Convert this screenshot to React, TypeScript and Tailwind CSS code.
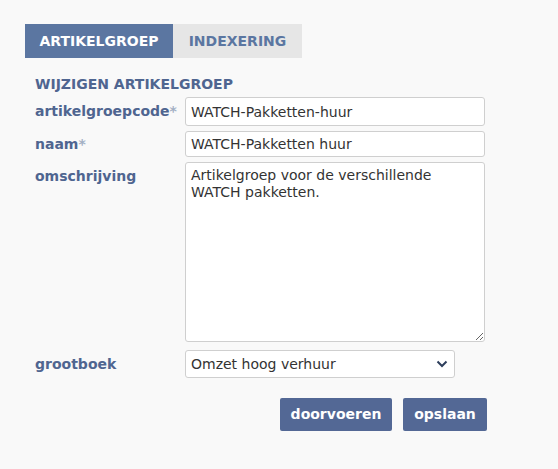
import React from "react";

export default function App() {
  const font = { fontFamily: '"DejaVu Sans", Verdana, sans-serif' };
  return (
    <div className="w-[558px] h-[469px] bg-[#f9f9f9] text-[#4f6590]" style={font}>
      <div className="pt-[24px] pl-[25px]">
        <div className="flex">
          <div className="h-[34px] w-[148px] bg-[#5b76a1] text-white font-bold text-[14px] flex items-center justify-center">ARTIKELGROEP</div>
          <div className="h-[34px] w-[129px] bg-[#e6e6e6] text-[#5b76a1] font-bold text-[14px] flex items-center justify-center">INDEXERING</div>
        </div>
        <div className="pl-[10px] pt-[18px]">
          <div className="font-bold text-[14px] leading-[17px] text-[#4f6590]">WIJZIGEN ARTIKELGROEP</div>
          <div className="grid grid-cols-[150px_300px] gap-y-[5px] mt-[4px] items-start">
            <div className="font-bold text-[14px] h-[29px] flex items-center">artikelgroepcode<span className="text-[#a3b0c4]">*</span></div>
            <input readOnly value="WATCH-Pakketten-huur" className="h-[29px] border border-[#cfcfcf] rounded-[3px] bg-white px-[5px] text-[14px] text-[#333]" style={font} />
            <div className="font-bold text-[14px] h-[26px] flex items-center">naam<span className="text-[#a3b0c4]">*</span></div>
            <input readOnly value="WATCH-Pakketten huur" className="h-[26px] border border-[#cfcfcf] rounded-[3px] bg-white px-[5px] text-[14px] text-[#333]" style={font} />
            <div className="font-bold text-[14px] pt-[4px]">omschrijving</div>
            <textarea readOnly value={"Artikelgroep voor de verschillende WATCH pakketten."} className="h-[180px] border border-[#cfcfcf] rounded-[3px] bg-white px-[5px] py-[4px] text-[14px] leading-[17px] text-[#333]" style={font} />
          </div>
          <div className="grid grid-cols-[150px_270px] mt-[8px] items-center">
            <div className="font-bold text-[14px]">grootboek</div>
            <div className="relative h-[28px] border border-[#cfcfcf] rounded-[3px] bg-white flex items-center px-[5px] text-[14px] text-[#333]">
              Omzet hoog verhuur
              <svg className="absolute right-[6px] top-[9px]" width="12" height="8" viewBox="0 0 12 8"><path d="M1.5 1.5 L6 6 L10.5 1.5" fill="none" stroke="#2d3e5c" strokeWidth="2" /></svg>
            </div>
          </div>
          <div className="flex justify-end gap-[11px] w-[452px] mt-[20px]">
            <button className="h-[33px] w-[112px] bg-[#536895] text-white font-bold text-[14px] rounded-[2px]" style={font}>doorvoeren</button>
            <button className="h-[33px] w-[84px] bg-[#536895] text-white font-bold text-[14px] rounded-[2px]" style={font}>opslaan</button>
          </div>
        </div>
      </div>
    </div>
  );
}
